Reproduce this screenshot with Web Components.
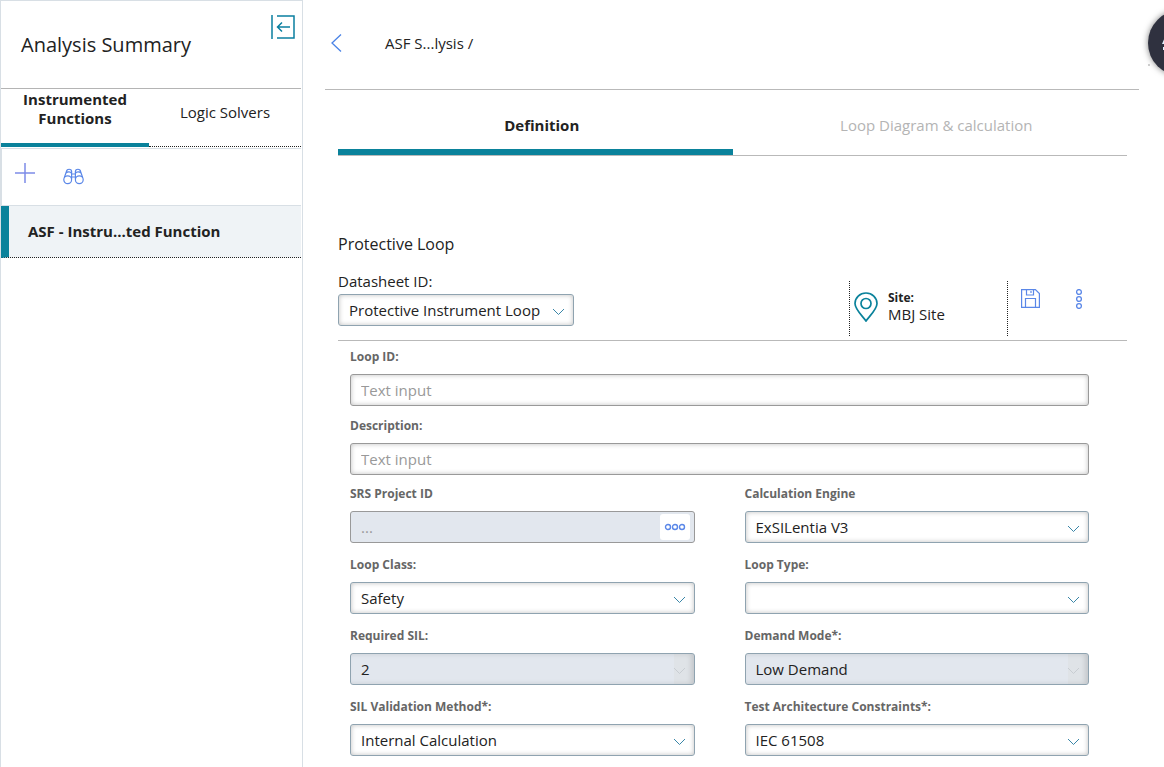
<!DOCTYPE html>
<html lang="en">
<head>
<meta charset="utf-8">
<title>Analysis Summary</title>
<style>
  body {
    margin: 0;
    background: #fff;
    color: #222;
    font-family: "Open Sans", "Noto Sans", sans-serif;
    font-size: 15px;
    overflow: hidden;
  }
</style>
</head>
<body>
<sif-app>
  <side-panel slot="side" heading="Analysis Summary"></side-panel>
  <page-header slot="main" crumb="ASF S...lysis /"></page-header>
  <page-tabs slot="main"></page-tabs>
  <datasheet-bar slot="main" heading="Protective Loop"></datasheet-bar>
  <loop-form slot="main">
    <form-field slot="wide" label="Loop ID:" type="text"></form-field>
    <form-field slot="wide" label="Description:" type="text"></form-field>
    <form-field label="SRS Project ID" type="lookup"></form-field>
    <form-field label="Calculation Engine" value="ExSILentia V3"></form-field>
    <form-field label="Loop Class:" value="Safety"></form-field>
    <form-field label="Loop Type:" value=""></form-field>
    <form-field label="Required SIL:" value="2" disabled></form-field>
    <form-field label="Demand Mode*:" value="Low Demand" disabled></form-field>
    <form-field label="SIL Validation Method*:" value="Internal Calculation"></form-field>
    <form-field label="Test Architecture Constraints*:" value="IEC 61508"></form-field>
  </loop-form>
  <help-bubble slot="main"></help-bubble>
</sif-app>

<script>
// shared rules, each element puts them at the top of its own style
const base = `
  :host, *, *::before, *::after { box-sizing: border-box; }
  button {
    font: inherit;
    color: inherit;
    background: none;
    border: 0;
    padding: 0;
    margin: 0;
    cursor: pointer;
  }
  svg { display: block; fill: none; }
`;

const selectStyle = `
  .select { position: relative; display: block; }
  select {
    appearance: none;
    display: block;
    width: 100%;
    height: 32px;
    margin: 0;
    padding: 0 28px 0 10px;
    font: inherit;
    color: #222;
    background: #fff;
    border: 1px solid #8fa3b0;
    border-radius: 3px;
    box-shadow: inset 0 0 5px rgba(0, 0, 0, 0.25);
    opacity: 1;
  }
  .select svg {
    position: absolute;
    right: 9px;
    top: 14px;
    stroke: #3a86a8;
    pointer-events: none;
  }
  select:disabled {
    background: linear-gradient(to right, #e2e7ee calc(100% - 20px), #dfe3e7 calc(100% - 20px));
    box-shadow: inset -3px 0 5px rgba(0, 0, 0, 0.12);
  }
  select:disabled + svg { stroke: #c8cdd2; }
`;

const chevron = `<svg width="13" height="8" viewBox="0 0 13 8"><path d="M1 1l5.500 5.500L12 1"/></svg>`;

function mount(el, html) {
  const template = document.createElement('template');
  template.innerHTML = html;
  el.attachShadow({ mode: 'open' }).appendChild(template.content.cloneNode(true));
}

class SifApp extends HTMLElement {
  constructor() {
    super();
    mount(this, `
      <style>
        ${base}
        :host { display: flex; min-height: 100vh; }
        aside {
          flex: 0 0 303px;
          border: 1px solid #d8dfe5;
          border-bottom: 0;
        }
        main {
          flex: 1;
          min-width: 0;
          padding: 0 25px 0 22px;
        }
      </style>
      <aside><slot name="side"></slot></aside>
      <main><slot name="main"></slot></main>
    `);
  }
}

class SidePanel extends HTMLElement {
  connectedCallback() {
    mount(this, `
      <style>
        ${base}
        :host { display: block; padding-right: 1px; }
        header {
          display: flex;
          justify-content: space-between;
          height: 88px;
          padding: 14px 6px 0 20px;
          border-bottom: 1px solid #b4b4b4;
        }
        h1 {
          margin: 16px 0 0;
          font-size: 20px;
          line-height: 28px;
          font-weight: 400;
        }
        header button { align-self: flex-start; }
        nav {
          display: flex;
          height: 58px;
          margin-bottom: 1px;
        }
        nav button {
          flex: 1;
          line-height: 19px;
          padding-bottom: 10px;
          border-bottom: 1px dotted #222;
        }
        nav .on {
          flex: 0 0 148px;
          padding: 0 16px 14px;
          font-weight: 700;
          border-bottom: 4px solid #0a829b;
        }
        .tools {
          display: flex;
          gap: 28px;
          height: 58px;
          padding: 14px 13px 0;
          border: 1px solid #d8dfe5;
          border-right: 0;
        }
        .tools button { align-self: flex-start; }
        .item {
          display: block;
          width: 100%;
          height: 52px;
          padding: 0 0 2px 19px;
          text-align: left;
          font-weight: 700;
          background: #eff3f6;
          border-left: 8px solid #0a829b;
          border-bottom: 1px dotted #222;
        }
      </style>
      <header>
        <h1>${this.getAttribute('heading')}</h1>
        <button aria-label="Collapse panel">
          <svg width="24" height="24" viewBox="0 0 24 24" stroke="#0a7fa0" stroke-width="1.500">
            <path d="M1 0v24M6 1h17v22H6M19 12H7M11 7.500L6.500 12l4.500 4.500"/>
          </svg>
        </button>
      </header>
      <nav>
        <button class="on">Instrumented Functions</button>
        <button>Logic Solvers</button>
      </nav>
      <div class="tools">
        <button aria-label="Add">
          <svg width="20" height="20" viewBox="0 0 20 20" stroke="#7d8ce8" stroke-width="1.500"><path d="M10 0v20M0 10h20"/></svg>
        </button>
        <button aria-label="Find">
          <svg width="21" height="22" viewBox="0 0 21 22" stroke="#5a87e8" stroke-width="1.200">
            <circle cx="4.700" cy="16.800" r="3.900"/><circle cx="16.300" cy="16.800" r="3.900"/>
            <path d="M1.300 14.800L3.600 8M8.600 16V8M12.400 16V8M19.700 14.800L17.400 8M3.600 8.500C3.600 5.500 8.600 5.500 8.600 8.500M12.400 8.500C12.400 5.500 17.400 5.500 17.400 8.500M3.300 10C4.500 8.500 7.500 8.500 8.600 10.500M12.400 10.500C13.500 8.500 16.500 8.500 17.700 10M8.600 11h3.800M8.600 14h3.800"/>
          </svg>
        </button>
      </div>
      <button class="item">ASF - Instru...ted Function</button>
    `);
  }
}

class PageHeader extends HTMLElement {
  connectedCallback() {
    mount(this, `
      <style>
        ${base}
        :host {
          display: flex;
          align-items: center;
          gap: 43px;
          height: 90px;
          padding: 0 6px 4px;
          border-bottom: 1px solid #b9b9b9;
        }
      </style>
      <button aria-label="Back">
        <svg width="11" height="18" viewBox="0 0 11 18" stroke="#4a83e6" stroke-width="1.300"><path d="M10 .5L1 9l9 8.500"/></svg>
      </button>
      <span>${this.getAttribute('crumb')}</span>
    `);
  }
}

class PageTabs extends HTMLElement {
  constructor() {
    super();
    mount(this, `
      <style>
        ${base}
        :host {
          display: flex;
          height: 66px;
          margin: 0 12px 0 13px;
          border-bottom: 1px solid #b9b9b9;
        }
        button {
          flex: 1;
          padding: 10px 0 0 13px;
          color: #b4b4b4;
          border-bottom: 6px solid transparent;
        }
        .on {
          color: #222;
          font-weight: 700;
          border-color: #0a829b;
        }
      </style>
      <button class="on">Definition</button>
      <button>Loop Diagram &amp; calculation</button>
    `);
  }
}

class DatasheetBar extends HTMLElement {
  connectedCallback() {
    mount(this, `
      <style>
        ${base}
        ${selectStyle}
        :host {
          display: block;
          margin: 76px 12px 0 13px;
          border-bottom: 1px solid #b9b9b9;
        }
        h2 {
          margin: 0 0 14px;
          font-size: 16px;
          line-height: 24px;
          font-weight: 400;
        }
        .row {
          display: flex;
          height: 70px;
        }
        .sheet { margin-right: auto; }
        .sheet label {
          display: block;
          margin-bottom: 2px;
          line-height: 22px;
        }
        .select { width: 236px; }
        .site {
          display: flex;
          flex: 0 0 158px;
          gap: 10px;
          height: 55px;
          margin-top: 11px;
          padding: 8px 4px;
          border-left: 1px dotted #222;
        }
        .site svg { margin-top: 3px; }
        .site b, .site span { display: block; line-height: 17px; }
        .site b { font-size: 12px; }
        .actions {
          display: flex;
          flex: 0 0 120px;
          gap: 35px;
          height: 55px;
          margin-top: 11px;
          padding: 8px 13px;
          border-left: 1px dotted #222;
        }
        .actions button { align-self: flex-start; }
      </style>
      <h2>${this.getAttribute('heading')}</h2>
      <div class="row">
        <div class="sheet">
          <label for="sheet">Datasheet ID:</label>
          <div class="select">
            <select id="sheet"><option>Protective Instrument Loop</option></select>
            ${chevron}
          </div>
        </div>
        <div class="site">
          <svg width="24" height="30" viewBox="0 0 24 30" stroke="#0a829b" stroke-width="1.700">
            <path d="M12 29C9 24.500 1 17.500 1 11.500a11 10.500 0 0 1 22 0C23 17.500 15 24.500 12 29z"/>
            <circle cx="12" cy="11.500" r="5"/>
          </svg>
          <div><b>Site:</b><span>MBJ Site</span></div>
        </div>
        <div class="actions">
          <button aria-label="Save">
            <svg width="19" height="19" viewBox="0 0 19 19" stroke="#5a87e8" stroke-width="1.200">
              <path d="M.6 .6h13.800l4 4v13.800H.6zM5.500 .6v5.400h7V.6M10 2v2M4.500 18.400V9.500h10v8.900"/>
            </svg>
          </button>
          <button aria-label="More actions">
            <svg width="8" height="20" viewBox="0 0 8 20" stroke="#5a87e8" stroke-width="1.300">
              <circle cx="4" cy="3" r="2.400"/><circle cx="4" cy="10" r="2.400"/><circle cx="4" cy="17" r="2.400"/>
            </svg>
          </button>
        </div>
      </div>
    `);
  }
}

class LoopForm extends HTMLElement {
  constructor() {
    super();
    mount(this, `
      <style>
        ${base}
        :host {
          display: block;
          margin: 8px 50px 0 25px;
        }
        .wide {
          display: grid;
          row-gap: 12px;
          margin-bottom: 11px;
        }
        .pairs {
          display: grid;
          grid-template-columns: 1fr 1fr;
          gap: 14px 50px;
        }
      </style>
      <div class="wide"><slot name="wide"></slot></div>
      <div class="pairs"><slot></slot></div>
    `);
  }
}

class FormField extends HTMLElement {
  connectedCallback() {
    mount(this, `
      <style>
        ${base}
        ${selectStyle}
        :host { display: block; }
        label {
          display: block;
          margin-bottom: 9px;
          font-size: 12px;
          line-height: 16px;
          font-weight: 700;
          color: #666;
        }
        input {
          display: block;
          width: 100%;
          height: 32px;
          margin: 0;
          padding: 0 10px;
          font: inherit;
          color: #222;
          background: #fff;
          border: 1px solid #999;
          border-radius: 3px;
          box-shadow: inset 0 0 5px rgba(0, 0, 0, 0.25);
        }
        input::placeholder { color: #999; opacity: 1; }
        .lookup {
          display: flex;
          height: 32px;
          padding: 2px 4px 2px 0;
          background: #e2e7ee;
          border: 1px solid #999;
          border-radius: 3px;
        }
        .lookup input {
          height: 26px;
          background: none;
          border: 0;
          box-shadow: none;
        }
        .lookup button {
          display: grid;
          flex: 0 0 30px;
          place-items: center;
          background: #fff;
          border-radius: 3px;
        }
      </style>
      <label for="control">${this.getAttribute('label')}</label>
      ${this.control()}
    `);
  }

  control() {
    const type = this.getAttribute('type');
    if (type === 'text') {
      return `<input id="control" type="text" placeholder="Text input">`;
    }
    if (type === 'lookup') {
      return `
        <div class="lookup">
          <input id="control" type="text" placeholder="..." disabled>
          <button aria-label="Browse">
            <svg width="22" height="8" viewBox="0 0 22 8" stroke="#5a87e8" stroke-width="1.400">
              <circle cx="4" cy="4" r="2.500"/><circle cx="11" cy="4" r="2.500"/><circle cx="18" cy="4" r="2.500"/>
            </svg>
          </button>
        </div>`;
    }
    return `
      <div class="select">
        <select id="control" ${this.hasAttribute('disabled') ? 'disabled' : ''}>
          <option>${this.getAttribute('value')}</option>
        </select>
        ${chevron}
      </div>`;
  }
}

class HelpBubble extends HTMLElement {
  constructor() {
    super();
    // floats over the page, mostly past its right edge
    mount(this, `
      <style>
        ${base}
        :host {
          position: fixed;
          top: 10px;
          right: -50px;
        }
        :host::before {
          content: "";
          position: absolute;
          top: 54px;
          left: 0;
          width: 2px;
          height: 2px;
          background: #ccc;
        }
        button {
          display: grid;
          place-items: center;
          width: 66px;
          height: 66px;
          border-radius: 50%;
          background: #2f313f;
          box-shadow: 0 0 6px rgba(0, 0, 0, 0.5);
        }
      </style>
      <button aria-label="Help">
        <svg width="38" height="20" viewBox="0 0 38 20"><path d="M3 4L0 11h5zM1 14h5v3H1z" fill="#dff0ff"/></svg>
      </button>
    `);
  }
}

customElements.define('sif-app', SifApp);
customElements.define('side-panel', SidePanel);
customElements.define('page-header', PageHeader);
customElements.define('page-tabs', PageTabs);
customElements.define('datasheet-bar', DatasheetBar);
customElements.define('loop-form', LoopForm);
customElements.define('form-field', FormField);
customElements.define('help-bubble', HelpBubble);
</script>
</body>
</html>
